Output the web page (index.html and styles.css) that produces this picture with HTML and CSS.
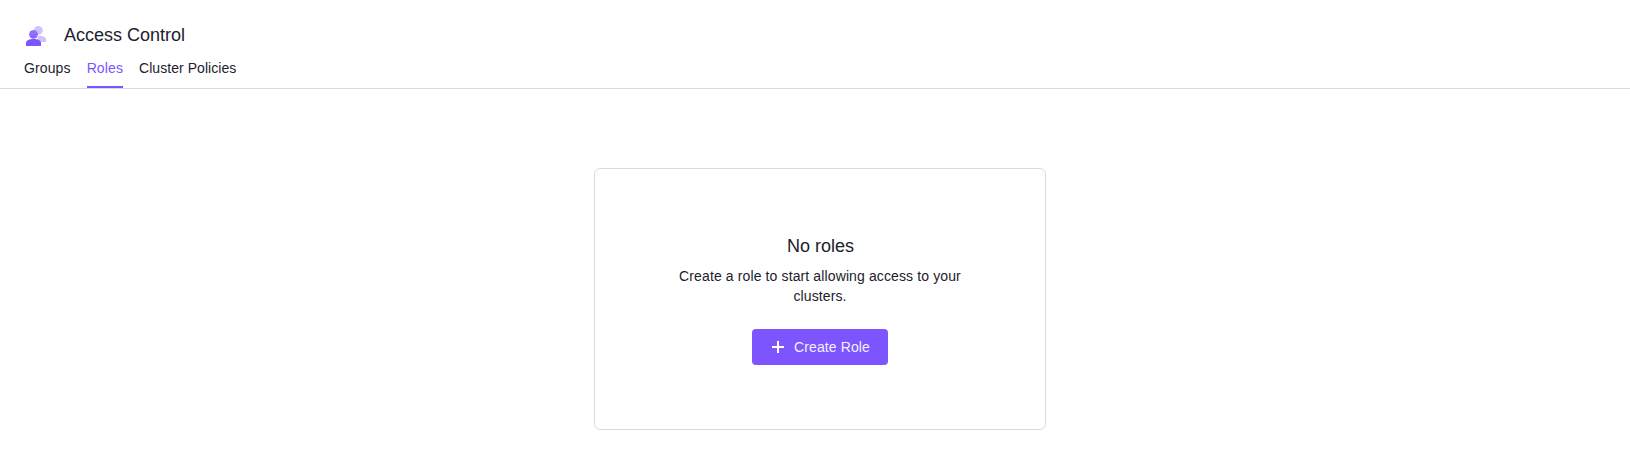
FILE: index.html
```html
<!DOCTYPE html>
<html lang="en">
<head>
<meta charset="utf-8">
<title>Access Control</title>
<link rel="stylesheet" href="styles.css">
</head>
<body>
<header class="header">
  <div class="title-row">
    <svg class="logo" width="24" height="24" viewBox="0 0 24 24">
      <defs>
        <linearGradient id="front" x1="0" y1="0" x2="0" y2="1"><stop offset="0" stop-color="#9577fb"/><stop offset="1" stop-color="#8663fd"/></linearGradient>
      </defs>
      <g fill="#cfc2fe"><circle cx="14.4" cy="6.300" r="4.400"/><path d="M12 18h10v-2.500c0-2.600-3.300-3.800-7.600-3.800z"/></g>
      <circle cx="9.500" cy="10.300" r="4.400" fill="url(#front)"/>
      <path d="M2 22v-3.200c0-2.400 3.600-3.800 7.500-3.800s7.500 1.400 7.500 3.800v3.200z" fill="#7d55ff"/>
    </svg>
    <h1 class="title">Access Control</h1>
  </div>
  <nav class="tabs">
    <a class="tab">Groups</a>
    <a class="tab tab-active">Roles</a>
    <a class="tab tab-long">Cluster Policies</a>
  </nav>
</header>
<main class="content">
  <section class="card">
    <h2 class="card-title">No roles</h2>
    <p class="card-text">Create a role to start allowing access to your clusters.</p>
    <button class="button"><svg class="plus" width="16" height="16" viewBox="0 0 16 16"><path d="M8 2v12M2 8h12" stroke="#fff" stroke-width="2"/></svg>Create Role</button>
  </section>
</main>
</body>
</html>
```

FILE: styles.css
```css
* { box-sizing: border-box; }
body { margin: 0; background: #fff; color: #1c212d; font: 14px/20px "Liberation Sans", Arial, sans-serif; letter-spacing: 0.12px; }
h1, h2, p { margin: 0; font-weight: 400; }
.header { height: 89px; padding: 24px 24px 0; border-bottom: 1px solid #d9d9e0; }
.title-row { display: flex; align-items: center; gap: 16px; height: 24px; }
.logo { display: block; }
.title { height: 24px; font-size: 18px; line-height: 22px; letter-spacing: 0; }
.tabs { display: flex; gap: 16px; margin-top: 10px; }
.tab { height: 30px; }
.tab-active { color: #7d55ff; border-bottom: 2px solid #7d55ff; }
.tab-long { letter-spacing: 0.05px; }
.content { display: flex; justify-content: center; padding: 79px 0 0 10px; }
.card { width: 452px; height: 262px; padding: 65px 80px; border: 1px solid #dbdbdf; border-radius: 6px; text-align: center; }
.card-title { padding-left: 1px; font-size: 18px; line-height: 24px; letter-spacing: 0; }
.card-text { margin-top: 8px; }
.button { display: inline-flex; align-items: center; gap: 8px; height: 36px; margin-top: 23px; padding: 0 18px; border: 0; border-radius: 4px; background: #7d55ff; color: #f4f0ff; font: inherit; letter-spacing: inherit; }
.plus { display: block; }
```
